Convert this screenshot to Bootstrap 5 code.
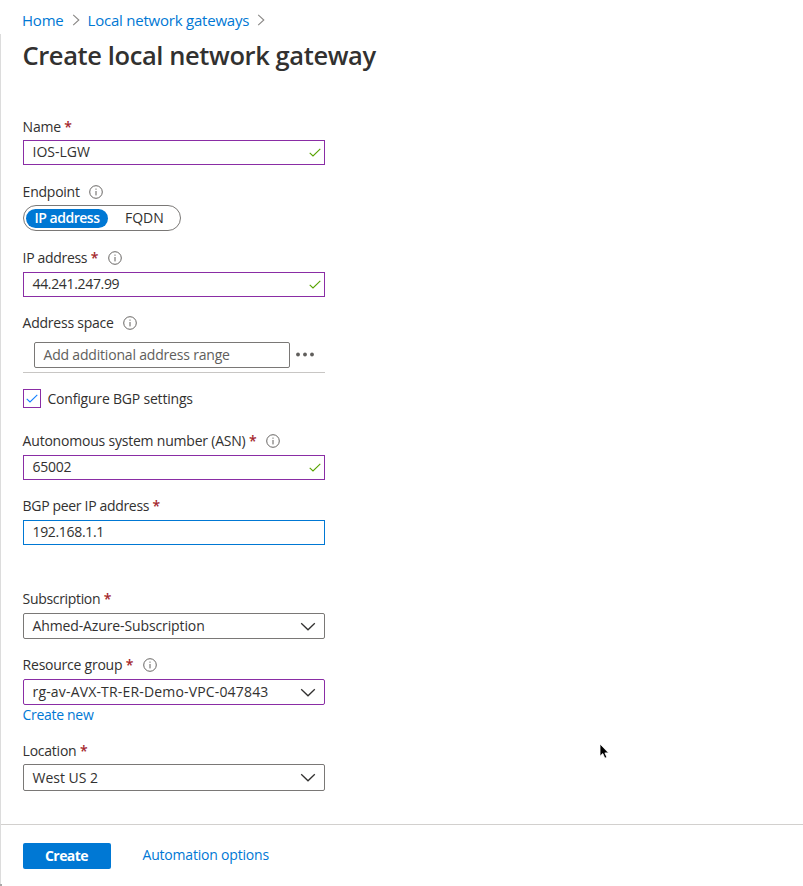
<!DOCTYPE html>
<html lang="en">
<head>
<meta charset="utf-8">
<meta name="viewport" content="width=device-width, initial-scale=1">
<title>Create local network gateway</title>
<link href="https://cdn.jsdelivr.net/npm/bootstrap@5.3.0/dist/css/bootstrap.min.css" rel="stylesheet">
<style>
  body { font-family: "Open Sans", "Noto Sans", sans-serif; font-size: 14px; line-height: 18px; letter-spacing: -.24px; color: #323130; background: #fff; overflow: hidden; }
  a { color: #0078d4; text-decoration: none; }
  .blade { height: 886px; padding-top: 11px; }
  .edge { left: 0; top: 34px; bottom: 0; width: 1px; background: #dcdcdc; }
  .gutter { padding-left: 23px; }
  .crumbs { font-size: 15px; letter-spacing: -.22px; margin-left: -1px; }
  .crumbs svg { margin: 0 8px 0 8px; }
  .blade-title { font-size: 25.5px; line-height: 36px; font-weight: 600; letter-spacing: -.4px; margin: 8px 0 0 -.5px; }
  .form-col { width: 325px; margin-top: 45px; }
  .field-label { height: 18px; margin-top: 17px; margin-left: -.4px; }
  .field-label:first-child { margin-top: 0; }
  .after-18 { margin-top: 18px; }
  .after-gap { margin-top: 45px; }
  .asn-label { margin-top: 24px; letter-spacing: -.21px; }
  .snug { letter-spacing: -.33px; }
  .req { color: #a4262c; margin-left: 3.5px; font-weight: 600; }
  .info { margin-left: 9px; }
  .req + .info { margin-left: 10px; }
  .box { width: 302px; border: 1px solid #8a2da5; margin-top: 5px; padding: 0 3px 2px 8.5px; height: 25px; line-height: 21px; background: #fff; }
  .box-first { margin-top: 4px; }
  .ok-mark { color: #57a300; margin-top: 2px; }
  .box-focus { border-color: #0078d4; }
  .pick { height: 26px; line-height: 24px; border-color: #7a7876; border-radius: 2px; padding: 0 8px 0 8.5px; }
  .pick-changed { border-color: #8a2da5; }
  .pick-tall { height: 27px; line-height: 25px; margin-top: 4px; }
  .switch { width: 158px; height: 26px; border: 1px solid #7a7876; border-radius: 13px; padding: 0 2px; margin-top: 4px; }
  .switch-on { width: 82px; flex: none; height: 19px; border-radius: 10px; background: #0078d4; color: #fff; font-weight: 600; line-height: 18px; letter-spacing: -.48px; }
  .switch-off { padding-left: 17px; letter-spacing: 0; }
  .range-row { margin-top: 10px; padding: 0 10px 4px 11px; border-bottom: 1px solid #c8c6c4; }
  .range-row svg { margin-bottom: 1px; }
  .range-box { width: 256px; height: 26px; line-height: 23px; border: 1px solid #7a7876; border-radius: 2px; padding-left: 8.5px; color: #605e5c; letter-spacing: -.19px; }
  .tick-row { margin-top: 16px; letter-spacing: -.2px; }
  .tick-box { width: 18px; height: 19px; margin-right: 6.5px; border: 1px solid #8a2da5; }
  .tick-mark { color: #1480ff; }
  .num { letter-spacing: -.33px; }
  .wide { letter-spacing: 0; }
  .sub-name { letter-spacing: -.12px; }
  .rg-name { letter-spacing: .17px; }
  .new-link { margin-top: 1px; margin-left: -.5px; letter-spacing: -.3px; }
  .footer-bar { margin-top: 33px; margin-left: 1px; border-top: 1px solid #d2d0ce; padding: 18px 0 0 22px; }
  .btn-create { width: 88px; height: 26px; padding: 0 1px 0 0; border: 0; border-radius: 2px; background: #0078d4; color: #fff; font-size: 14px; font-weight: 700; line-height: 24px; letter-spacing: -.55px; }
  .btn-create:hover { background: #106ebe; color: #fff; }
  .auto-link { margin-left: 31.5px; letter-spacing: -.2px; line-height: 24px; }
  .pointer { left: 599px; top: 743px; }
  .corner { left: 0; bottom: 0; width: 2px; height: 2px; background: #a8a8a8; }
</style>
<script src="https://cdn.jsdelivr.net/npm/bootstrap@5.3.0/dist/js/bootstrap.bundle.min.js"></script>
</head>
<body>
<svg class="d-none">
  <symbol id="info" viewBox="0 0 14 14"><circle cx="7" cy="7" r="6.3" fill="none" stroke="#605e5c" stroke-width=".95"/><path d="M7 6v4.4" stroke="#605e5c" stroke-width="1"/><circle cx="7" cy="4.1" r=".7" fill="#605e5c"/></symbol>
  <symbol id="check" viewBox="0 0 12 9"><path d="M.7 4.8 4 8 11.3.8" fill="none" stroke="currentColor" stroke-width="1.1"/></symbol>
  <symbol id="chev" viewBox="0 0 16 9"><path d="M1.2 1.2 8 7.8 14.8 1.2" fill="none" stroke="#323130" stroke-width="1.3"/></symbol>
  <symbol id="crumb" viewBox="0 0 8 12"><path d="M1.2.8 6.8 6 1.2 11.2" fill="none" stroke="#8a8886" stroke-width="1.1"/></symbol>
</svg>

<main class="blade position-relative">
  <div class="edge position-absolute"></div>

  <header class="gutter">
    <nav class="crumbs d-flex align-items-center">
      <a href="#">Home</a><svg width="8" height="12"><use href="#crumb"/></svg>
      <a href="#">Local network gateways</a><svg width="8" height="12"><use href="#crumb"/></svg>
    </nav>
    <h1 class="blade-title">Create local network gateway</h1>
  </header>

  <form class="form-col gutter">
    <div class="field-label d-flex align-items-center">Name<span class="req">*</span></div>
    <div class="box box-first wide d-flex justify-content-between align-items-center">IOS-LGW<svg class="ok-mark" width="12" height="9"><use href="#check"/></svg></div>

    <div class="field-label after-18 d-flex align-items-center">Endpoint<svg class="info" width="14" height="14"><use href="#info"/></svg></div>
    <div class="switch d-flex align-items-center"><span class="switch-on text-center">IP address</span><span class="switch-off">FQDN</span></div>

    <div class="field-label after-18 snug d-flex align-items-center">IP address<span class="req">*</span><svg class="info" width="14" height="14"><use href="#info"/></svg></div>
    <div class="box num d-flex justify-content-between align-items-center">44.241.247.99<svg class="ok-mark" width="12" height="9"><use href="#check"/></svg></div>

    <div class="field-label d-flex align-items-center">Address space<svg class="info" width="14" height="14"><use href="#info"/></svg></div>
    <div class="range-row d-flex align-items-center justify-content-between">
      <div class="range-box">Add additional address range</div>
      <svg width="20" height="6" fill="#605e5c"><circle cx="3" cy="2.5" r="1.9"/><circle cx="10" cy="2.5" r="1.9"/><circle cx="17" cy="2.5" r="1.9"/></svg>
    </div>

    <div class="tick-row d-flex align-items-center"><span class="tick-box d-flex align-items-center justify-content-center"><svg class="tick-mark" width="12" height="9"><use href="#check"/></svg></span>Configure BGP settings</div>

    <div class="field-label asn-label d-flex align-items-center">Autonomous system number (ASN)<span class="req">*</span><svg class="info" width="14" height="14"><use href="#info"/></svg></div>
    <div class="box d-flex justify-content-between align-items-center">65002<svg class="ok-mark" width="12" height="9"><use href="#check"/></svg></div>

    <div class="field-label snug d-flex align-items-center">BGP peer IP address<span class="req">*</span></div>
    <div class="box box-focus num">192.168.1.1</div>

    <div class="field-label after-gap snug d-flex align-items-center">Subscription<span class="req">*</span></div>
    <div class="box pick sub-name d-flex justify-content-between align-items-center">Ahmed-Azure-Subscription<svg width="16" height="9"><use href="#chev"/></svg></div>

    <div class="field-label d-flex align-items-center">Resource group<span class="req">*</span><svg class="info" width="14" height="14"><use href="#info"/></svg></div>
    <div class="box pick pick-changed rg-name d-flex justify-content-between align-items-center">rg-av-AVX-TR-ER-Demo-VPC-047843<svg width="16" height="9"><use href="#chev"/></svg></div>
    <a class="new-link d-block" href="#">Create new</a>

    <div class="field-label after-18 d-flex align-items-center">Location<span class="req">*</span></div>
    <div class="box pick pick-tall wide d-flex justify-content-between align-items-center">West US 2<svg width="16" height="9"><use href="#chev"/></svg></div>
  </form>

  <footer class="footer-bar d-flex align-items-start">
    <button class="btn btn-create" type="button">Create</button>
    <a class="auto-link" href="#">Automation options</a>
  </footer>

  <svg class="pointer position-absolute" width="12" height="18" viewBox="0 0 12 18"><path d="M1 1v12.2l2.8-2.6 2 4.6 2.1-.9-2-4.4h3.7z" fill="#000" stroke="#fff" stroke-width=".8"/></svg>
  <div class="corner position-absolute"></div>
</main>
</body>
</html>
